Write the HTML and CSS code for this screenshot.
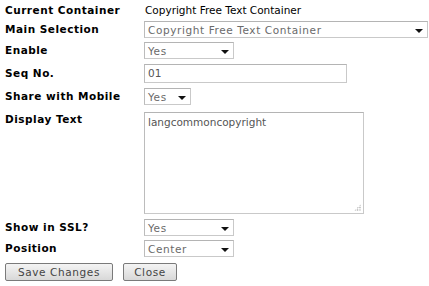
FILE: index.html
```html
<!DOCTYPE html>
<html>
<head>
<meta charset="utf-8">
<link rel="stylesheet" href="styles.css">
</head>
<body>
<form class="form">
  <div class="row row-text">
    <div class="label">Current Container</div>
    <div class="value">Copyright Free Text Container</div>
  </div>
  <div class="row">
    <div class="label">Main Selection</div>
    <div class="select select-wide"><span>Copyright Free Text Container</span><i class="arrow"></i></div>
  </div>
  <div class="row">
    <div class="label">Enable</div>
    <div class="select select-mid"><span>Yes</span><i class="arrow"></i></div>
  </div>
  <div class="row row-input">
    <div class="label">Seq No.</div>
    <div class="input">01</div>
  </div>
  <div class="row">
    <div class="label">Share with Mobile</div>
    <div class="select select-small"><span>Yes</span><i class="arrow"></i></div>
  </div>
  <div class="row row-area">
    <div class="label">Display Text</div>
    <div class="textarea">langcommoncopyright<i class="grip"></i></div>
  </div>
  <div class="row">
    <div class="label">Show in SSL?</div>
    <div class="select select-mid"><span>Yes</span><i class="arrow"></i></div>
  </div>
  <div class="row">
    <div class="label">Position</div>
    <div class="select select-mid"><span>Center</span><i class="arrow"></i></div>
  </div>
  <div class="buttons">
    <button type="button" class="btn btn-save">Save Changes</button>
    <button type="button" class="btn btn-close">Close</button>
  </div>
</form>
</body>
</html>
```

FILE: styles.css
```css
html, body {
  margin: 0;
  padding: 0;
  background: #ffffff;
}
body {
  font-family: "DejaVu Sans", Verdana, sans-serif;
  font-size: 11px;
  color: #000;
}
.form {
  padding: 4px 0 0 5px;
  display: flex;
  flex-direction: column;
}
.row {
  display: flex;
  align-items: center;
  margin-bottom: 4px;
}
.row-text {
  height: 13px;
  margin-bottom: 4px;
}
.label {
  width: 139px;
  flex: none;
  font-weight: bold;
  font-size: 10.5px;
  line-height: 13px;
  letter-spacing: 0.5px;
}
.value {
  font-size: 10.5px;
  line-height: 13px;
  padding-left: 1px;
}
.select {
  box-sizing: border-box;
  height: 17px;
  border: 1px solid #c9c9c9;
  border-top-color: #b4b4b4;
  border-left-color: #bcbcbc;
  background: #fff;
  display: flex;
  align-items: center;
  justify-content: space-between;
  padding: 0 4px 0 3px;
  color: #6a6a6a;
  font-size: 10.5px;
  letter-spacing: 0.6px;
}
.select span {
  line-height: 14px;
}
.select-wide { width: 284px; }
.select-mid { width: 90px; }
.select-small { width: 47px; }
.arrow {
  width: 0;
  height: 0;
  border-left: 4px solid transparent;
  border-right: 4px solid transparent;
  border-top: 4px solid #111;
  margin-top: 2px;
}
.row-input {
  margin-top: 1px;
  margin-bottom: 5px;
}
.input {
  box-sizing: border-box;
  width: 203px;
  height: 19px;
  border: 1px solid #c9c9c9;
  border-top-color: #b4b4b4;
  border-left-color: #bcbcbc;
  padding: 2px 3px;
  color: #555;
  font-size: 10.5px;
  line-height: 13px;
}
.row-area {
  align-items: flex-start;
  margin-top: 3px;
  margin-bottom: 5px;
}
.row-area .label {
  padding-top: 1px;
}
.textarea {
  position: relative;
  box-sizing: border-box;
  width: 220px;
  height: 102px;
  border: 1px solid #c9c9c9;
  border-top-color: #b4b4b4;
  border-left-color: #bcbcbc;
  padding: 3px 3px;
  color: #555;
  font-size: 10.5px;
  line-height: 13px;
}
.grip {
  position: absolute;
  right: 2px;
  bottom: 2px;
  width: 7px;
  height: 7px;
  background:
    radial-gradient(circle, #999 0.6px, transparent 0.9px) 0 0 / 2.4px 2.4px;
  clip-path: polygon(100% 0, 100% 100%, 0 100%);
}
.buttons {
  display: flex;
  gap: 10px;
  margin-top: 2px;
}
.btn {
  font-family: "DejaVu Sans", Verdana, sans-serif;
  font-size: 10.5px;
  letter-spacing: 0.6px;
  color: #444;
  height: 18px;
  padding: 0 7px;
  margin: 0;
  border: 1px solid #7a7a7a;
  border-radius: 2px;
  background: linear-gradient(#f4f4f4, #d8d8d8);
  line-height: 14px;
}
.btn-save { width: 108px; }
.btn-close { width: 54px; }
```
